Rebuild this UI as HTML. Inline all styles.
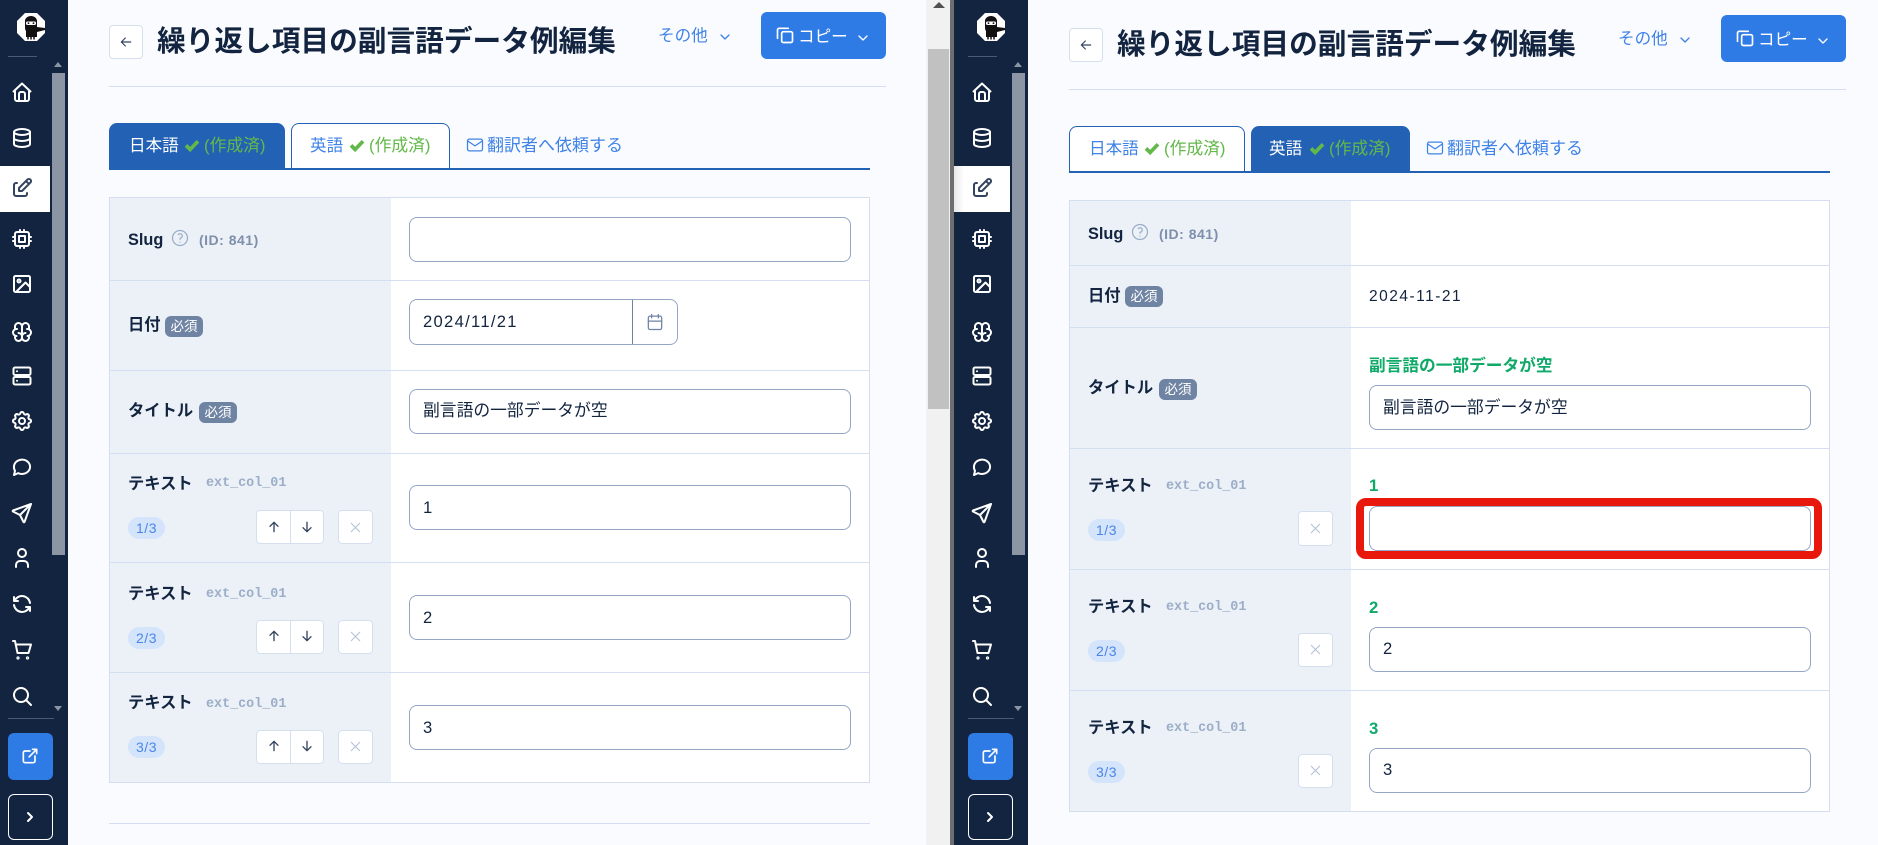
<!DOCTYPE html>
<html lang="ja"><head><meta charset="utf-8"><title>繰り返し項目の副言語データ例編集</title>
<style>
html,body{margin:0;padding:0;width:1878px;height:845px;overflow:hidden;background:#fafbfe}
body{position:relative;font-family:"Liberation Sans","Noto Sans CJK JP",sans-serif;color:#12243f}
div,svg,span.t{position:absolute;box-sizing:border-box}
.t{position:absolute;white-space:nowrap;line-height:24px;height:24px;font-size:16.6px}
.b{font-weight:700}
.side{background:#12243f;top:0;height:845px}
.i{width:24px;height:24px;fill:none;stroke:#fff;stroke-width:2;stroke-linecap:round;stroke-linejoin:round}
.dk{stroke:#33445f}
.inp{background:#fff;border:1px solid #94a6c4;border-radius:8px;height:45px;width:442px}
.h{background:#ecf1f8}
.ln{height:1px;background:#d3dff0}
.lab{font-weight:700;font-size:16.3px}
.mono{font-family:"Liberation Mono",monospace;font-weight:700;font-size:13.4px;color:#9cadc8}
.req{background:#6f83a3;color:#fff;border-radius:6px;width:38px;height:21px;font-size:13.5px;line-height:21px;text-align:center}
.cnt{background:#d4e4fb;color:#4a86e8;border-radius:11px;width:37px;height:22px;font-size:14px;line-height:22px;text-align:center;letter-spacing:.5px}
.btn{background:#fff;border:1px solid #d5e0ef;border-radius:4px}
.val{font-size:16.6px;letter-spacing:.5px}
.link{color:#3f83e6}
.grn{color:#63b84a}
.g{color:#0fa968;font-weight:700;font-size:16.7px}
.tri{width:0;height:0;border-left:4px solid transparent;border-right:4px solid transparent}
.ck{width:18px;height:18px;stroke:#63b84a;stroke-width:5;stroke-linecap:butt;stroke-linejoin:miter}
</style></head><body>
<svg width="0" height="0" style="position:absolute">
<defs>
<symbol id="home" viewBox="0 0 24 24"><path d="M5 11.500V19a2 2 0 0 0 2 2h10a2 2 0 0 0 2-2v-7.500M3.500 11.500 12 3.500l8.500 8M9 21v-7a2 2 0 0 1 2-2h2a2 2 0 0 1 2 2v7"/></symbol>
<symbol id="db" viewBox="0 0 24 24"><ellipse cx="12" cy="6" rx="8" ry="3"/><path d="M4 6v12a8 3 0 0 0 16 0V6M4 12a8 3 0 0 0 16 0"/></symbol>
<symbol id="edit" viewBox="0 0 24 24"><path d="M7 7H6a2 2 0 0 0-2 2v9a2 2 0 0 0 2 2h9a2 2 0 0 0 2-2v-1M20.400 6.600a2.100 2.100 0 0 0-3-3L9 12v3h3zM16 5l3 3"/></symbol>
<symbol id="chip" viewBox="0 0 24 24"><rect x="5" y="5" width="14" height="14" rx="2"/><path d="M9 9h6v6H9zM3 10h2M3 14h2M10 3v2M14 3v2M21 10h-2M21 14h-2M14 21v-2M10 21v-2"/></symbol>
<symbol id="img" viewBox="0 0 24 24"><rect x="4" y="4" width="16" height="16" rx="1.500"/><circle cx="9" cy="9" r="1.500"/><path d="M20 15l-4.500-4.500L6 20"/></symbol>
<symbol id="brain" viewBox="0 0 24 24"><path d="M15.500 13a3.500 3.500 0 0 0-3.500 3.500v1a3.500 3.500 0 0 0 7 0v-1.800M8.500 13a3.500 3.500 0 0 1 3.500 3.500v1a3.500 3.500 0 0 1-7 0v-1.800M17.500 16a3.500 3.500 0 0 0 0-7h-.5M19 9.300V6.500a3.500 3.500 0 0 0-7 0M6.500 16a3.500 3.500 0 0 1 0-7h.5M5 9.300V6.500a3.500 3.500 0 0 1 7 0v10"/></symbol>
<symbol id="srv" viewBox="0 0 24 24"><rect x="3.500" y="3.500" width="17" height="7.500" rx="1.500"/><rect x="3.500" y="13" width="17" height="7.500" rx="1.500"/><path d="M7 7.200h.01M7 16.700h.01"/></symbol>
<symbol id="gear" viewBox="0 0 24 24"><path d="M10.325 4.317c.426-1.756 2.924-1.756 3.350 0a1.724 1.724 0 0 0 2.573 1.066c1.543-.94 3.310.826 2.370 2.370a1.724 1.724 0 0 0 1.065 2.572c1.756.426 1.756 2.924 0 3.350a1.724 1.724 0 0 0-1.066 2.573c.94 1.543-.826 3.310-2.370 2.370a1.724 1.724 0 0 0-2.572 1.065c-.426 1.756-2.924 1.756-3.350 0a1.724 1.724 0 0 0-2.573-1.066c-1.543.94-3.310-.826-2.370-2.370a1.724 1.724 0 0 0-1.065-2.572c-1.756-.426-1.756-2.924 0-3.350a1.724 1.724 0 0 0 1.066-2.573c-.94-1.543.826-3.310 2.370-2.370 1 .608 2.296.07 2.572-1.065z"/><circle cx="12" cy="12" r="3"/></symbol>
<symbol id="chat" viewBox="0 0 24 24"><path d="M4 20l1-4C3 12.500 3.800 8.500 7 6.200c3.200-2.300 7.700-2.100 10.600.4 2.900 2.500 3.300 6.500.9 9.400-2.400 2.900-6.800 3.800-10.300 2.100L4 20"/></symbol>
<symbol id="send" viewBox="0 0 24 24"><path d="M10 14L21 3M21 3l-6.500 18a.55.55 0 0 1-1 0L10 14l-7-3.500a.55.55 0 0 1 0-1L21 3"/></symbol>
<symbol id="user" viewBox="0 0 24 24"><circle cx="12" cy="7" r="4"/><path d="M6 21v-2a4 4 0 0 1 4-4h4a4 4 0 0 1 4 4v2"/></symbol>
<symbol id="sync" viewBox="0 0 24 24"><path d="M20 11A8.100 8.100 0 0 0 4.500 9M4 5v4h4M4 13a8.100 8.100 0 0 0 15.500 2m.5 4v-4h-4"/></symbol>
<symbol id="cart" viewBox="0 0 24 24"><path d="M3 3h2l2.500 12h11l2.500-8.500H6"/><circle cx="8" cy="20" r=".6"/><circle cx="17.500" cy="20" r=".6"/></symbol>
<symbol id="search" viewBox="0 0 24 24"><circle cx="11" cy="11" r="7"/><path d="M21 21l-5-5"/></symbol>
<symbol id="ext" viewBox="0 0 24 24"><path d="M12 6H6a2 2 0 0 0-2 2v10a2 2 0 0 0 2 2h10a2 2 0 0 0 2-2v-6M11 13l9-9M15 4h5v5"/></symbol>
<symbol id="chr" viewBox="0 0 24 24"><path d="M9 6l6 6-6 6"/></symbol>
<symbol id="chd" viewBox="0 0 24 24"><path d="M6 9l6 6 6-6"/></symbol>
<symbol id="copy" viewBox="0 0 24 24"><rect x="8" y="8" width="13" height="13" rx="2"/><path d="M16 4H5a2 2 0 0 0-2 2v10"/></symbol>
<symbol id="back" viewBox="0 0 24 24"><path d="M5 12h14M5 12l6 6M5 12l6-6"/></symbol>
<symbol id="up" viewBox="0 0 24 24"><path d="M12 5v14M18 11l-6-6M6 11l6-6"/></symbol>
<symbol id="dn" viewBox="0 0 24 24"><path d="M12 5v14M18 13l-6 6M6 13l6 6"/></symbol>
<symbol id="x" viewBox="0 0 24 24"><path d="M18 6L6 18M6 6l12 12"/></symbol>
<symbol id="chk" viewBox="0 0 24 24"><path d="M4 12.500l5.500 5.500L20 7"/></symbol>
<symbol id="mail" viewBox="0 0 24 24"><rect x="3" y="5" width="18" height="14" rx="2"/><path d="M3 7l9 6 9-6"/></symbol>
<symbol id="cal" viewBox="0 0 24 24"><rect x="4" y="5" width="16" height="16" rx="2"/><path d="M16 3v4M8 3v4M4 11h16"/></symbol>
<symbol id="help" viewBox="0 0 24 24"><circle cx="12" cy="12" r="9"/><path d="M12 17v.01M12 13.500a1.500 1.500 0 0 1 1-1.500 2.600 2.600 0 1 0-3-4"/></symbol>
<symbol id="logo" viewBox="0 0 28 28"><path d="M8 0h12l8 8v12l-8 8H8l-8-8V8z" fill="#fff"/><path d="M8 8c0-3 3-5 6-5s6 2 6 5v6l8 1v2l-8 2v5H9v-6c-1-1-1-3-1-5z" fill="#111"/><rect x="9" y="8.500" width="10" height="3.500" rx="1.500" fill="#fff"/><circle cx="11.500" cy="10.200" r=".9" fill="#111"/><circle cx="16.500" cy="10.200" r=".9" fill="#111"/><path d="M11 24v2.500M14 24v2.500M17 24v2.500" stroke="#111" stroke-width="1.500"/></symbol>
</defs></svg>

<!-- LEFT SIDEBAR -->
<div class="side" style="left:0;width:68px"></div>
<div style="left:52px;top:73px;width:13px;height:482px;background:#8b95a3"></div>
<div class="tri" style="left:54px;top:62px;border-bottom:5px solid #8b95a3"></div>
<div class="tri" style="left:54px;top:706px;border-top:5px solid #8b95a3"></div>
<svg style="left:17px;top:13px" width="28" height="28"><use href="#logo"/></svg>
<div style="left:8px;top:56px;width:29px;height:1px;background:#4a5a72"></div>
<div style="left:0;top:166px;width:50px;height:46px;background:#fff"></div>
<svg class="i" style="left:10px;top:80px"><use href="#home"/></svg>
<svg class="i" style="left:10px;top:126px"><use href="#db"/></svg>
<svg class="i dk" style="left:10px;top:176px"><use href="#edit"/></svg>
<svg class="i" style="left:10px;top:227px"><use href="#chip"/></svg>
<svg class="i" style="left:10px;top:272px"><use href="#img"/></svg>
<svg class="i" style="left:10px;top:320px"><use href="#brain"/></svg>
<svg class="i" style="left:10px;top:364px"><use href="#srv"/></svg>
<svg class="i" style="left:10px;top:409px"><use href="#gear"/></svg>
<svg class="i" style="left:10px;top:455px"><use href="#chat"/></svg>
<svg class="i" style="left:10px;top:501px"><use href="#send"/></svg>
<svg class="i" style="left:10px;top:546px"><use href="#user"/></svg>
<svg class="i" style="left:10px;top:592px"><use href="#sync"/></svg>
<svg class="i" style="left:10px;top:638px"><use href="#cart"/></svg>
<svg class="i" style="left:10px;top:684px"><use href="#search"/></svg>
<div style="left:8px;top:718px;width:46px;height:1px;background:#4a5a72"></div>
<div style="left:8px;top:733px;width:45px;height:47px;background:#2f7be6;border-radius:6px"></div>
<svg class="i" style="left:20px;top:746px;width:20px;height:20px"><use href="#ext"/></svg>
<div style="left:8px;top:794px;width:45px;height:46px;border:1px solid #fff;border-radius:6px"></div>
<svg class="i" style="left:22px;top:809px;width:16px;height:16px;stroke-width:3"><use href="#chr"/></svg>

<!-- LEFT CONTENT -->
<div class="btn" style="left:109px;top:25px;width:34px;height:34px"></div>
<svg class="i" style="left:118px;top:34px;width:16px;height:16px;stroke:#33445f;stroke-width:1.800"><use href="#back"/></svg>
<span class="t b" style="left:157px;top:30px;font-size:28.7px">繰り返し項目の副言語データ例編集</span>
<span class="t link" style="left:658px;top:24px">その他</span>
<svg class="i" style="left:717px;top:29px;width:16px;height:16px;stroke:#3f83e6"><use href="#chd"/></svg>
<div style="left:761px;top:12px;width:125px;height:47px;background:#2f7be6;border-radius:6px"></div>
<svg class="i" style="left:775px;top:25px;width:20px;height:20px"><use href="#copy"/></svg>
<span class="t" style="left:798px;top:25px;color:#fff">コピー</span>
<svg class="i" style="left:855px;top:30px;width:16px;height:16px"><use href="#chd"/></svg>
<div class="ln" style="left:109px;top:86px;width:777px"></div>

<div style="left:109px;top:123px;width:176px;height:47px;background:#2361b5;border-radius:8px 8px 0 0"></div>
<span class="t" style="left:129px;top:134px;color:#fff">日本語</span>
<svg class="i ck" style="left:183px;top:136px"><use href="#chk"/></svg>
<span class="t grn" style="left:204px;top:134px;font-size:16.8px">(作成済)</span>
<div style="left:291px;top:123px;width:159px;height:47px;background:#fff;border:1.500px solid #2361b5;border-bottom:0;border-radius:8px 8px 0 0"></div>
<span class="t link" style="left:310px;top:134px">英語</span>
<svg class="i ck" style="left:348px;top:136px"><use href="#chk"/></svg>
<span class="t grn" style="left:369px;top:134px;font-size:16.8px">(作成済)</span>
<svg class="i" style="left:465px;top:135px;width:20px;height:20px;stroke:#3f83e6;stroke-width:1.500"><use href="#mail"/></svg>
<span class="t link" style="left:487px;top:134px;font-size:17px">翻訳者へ依頼する</span>
<div style="left:109px;top:168px;width:761px;height:2px;background:#2361b5"></div>

<div style="left:109px;top:197px;width:761px;height:586px;background:#fff;border:1px solid #d3dff0"></div>
<div class="h" style="left:110px;top:198px;width:281px;height:584px"></div>
<div class="ln" style="left:110px;top:280px;width:759px"></div>
<div class="ln" style="left:110px;top:370px;width:759px"></div>
<div class="ln" style="left:110px;top:453px;width:759px"></div>
<div class="ln" style="left:110px;top:562px;width:759px"></div>
<div class="ln" style="left:110px;top:672px;width:759px"></div>

<span class="t lab" style="left:128px;top:228px">Slug</span>
<svg class="i" style="left:170px;top:228px;width:20px;height:20px;stroke:#9cadc8;stroke-width:1.500"><use href="#help"/></svg>
<span class="t b" style="left:199px;top:228px;font-size:14px;color:#7e8fac;letter-spacing:.5px">(ID: 841)</span>
<div class="inp" style="left:409px;top:217px"></div>

<span class="t lab" style="left:128px;top:313px">日付</span>
<div class="req" style="left:165px;top:316px">必須</div>
<div class="inp" style="left:409px;top:299px;width:269px;height:46px"></div>
<div style="left:632px;top:300px;width:1px;height:44px;background:#6f83a3"></div>
<span class="t val" style="left:423px;top:310px;letter-spacing:1.300px">2024/11/21</span>
<svg class="i" style="left:645px;top:312px;width:20px;height:20px;stroke:#6f83a3;stroke-width:1.500"><use href="#cal"/></svg>

<span class="t lab" style="left:128px;top:399px">タイトル</span>
<div class="req" style="left:199px;top:402px">必須</div>
<div class="inp" style="left:409px;top:389px"></div>
<span class="t" style="left:423px;top:399px;font-size:16.8px">副言語の一部データが空</span>

<span class="t lab" style="left:128px;top:472px">テキスト</span>
<span class="t mono" style="left:206px;top:472px">ext_col_01</span>
<div class="cnt" style="left:128px;top:517px">1/3</div>
<div class="btn" style="left:256px;top:510px;width:68px;height:34px"></div>
<div style="left:290px;top:510px;width:1px;height:34px;background:#d5e0ef"></div>
<svg class="i dk" style="left:266px;top:519px;width:16px;height:16px"><use href="#up"/></svg>
<svg class="i dk" style="left:299px;top:519px;width:16px;height:16px"><use href="#dn"/></svg>
<div class="btn" style="left:338px;top:510px;width:35px;height:34px"></div>
<svg class="i" style="left:347px;top:519px;width:17px;height:17px;stroke:#b5c3d8;stroke-width:1.500"><use href="#x"/></svg>
<div class="inp" style="left:409px;top:485px"></div>
<span class="t val" style="left:423px;top:496px">1</span>

<span class="t lab" style="left:128px;top:582px">テキスト</span>
<span class="t mono" style="left:206px;top:583px">ext_col_01</span>
<div class="cnt" style="left:128px;top:627px">2/3</div>
<div class="btn" style="left:256px;top:620px;width:68px;height:34px"></div>
<div style="left:290px;top:620px;width:1px;height:34px;background:#d5e0ef"></div>
<svg class="i dk" style="left:266px;top:628px;width:16px;height:16px"><use href="#up"/></svg>
<svg class="i dk" style="left:299px;top:628px;width:16px;height:16px"><use href="#dn"/></svg>
<div class="btn" style="left:338px;top:620px;width:35px;height:34px"></div>
<svg class="i" style="left:347px;top:628px;width:17px;height:17px;stroke:#b5c3d8;stroke-width:1.500"><use href="#x"/></svg>
<div class="inp" style="left:409px;top:595px"></div>
<span class="t val" style="left:423px;top:606px">2</span>

<span class="t lab" style="left:128px;top:691px">テキスト</span>
<span class="t mono" style="left:206px;top:693px">ext_col_01</span>
<div class="cnt" style="left:128px;top:736px">3/3</div>
<div class="btn" style="left:256px;top:730px;width:68px;height:34px"></div>
<div style="left:290px;top:730px;width:1px;height:34px;background:#d5e0ef"></div>
<svg class="i dk" style="left:266px;top:738px;width:16px;height:16px"><use href="#up"/></svg>
<svg class="i dk" style="left:299px;top:738px;width:16px;height:16px"><use href="#dn"/></svg>
<div class="btn" style="left:338px;top:730px;width:35px;height:34px"></div>
<svg class="i" style="left:347px;top:738px;width:17px;height:17px;stroke:#b5c3d8;stroke-width:1.500"><use href="#x"/></svg>
<div class="inp" style="left:409px;top:705px"></div>
<span class="t val" style="left:423px;top:716px">3</span>
<div class="ln" style="left:109px;top:823px;width:761px"></div>

<!-- BROWSER SCROLLBAR -->
<div style="left:926px;top:0;width:24px;height:845px;background:#f1f1f1"></div>
<div style="left:928px;top:49px;width:21px;height:360px;background:#c1c1c1"></div>
<div class="tri" style="left:933px;top:2px;border-left-width:6px;border-right-width:6px;border-bottom:6px solid #505050"></div>
<div style="left:950px;top:0;width:4px;height:845px;background:#6e6e6e"></div>

<!-- RIGHT SIDEBAR -->
<div class="side" style="left:954px;width:74px"></div>
<div style="left:1012px;top:73px;width:13px;height:482px;background:#8b95a3"></div>
<div class="tri" style="left:1014px;top:62px;border-bottom:5px solid #8b95a3"></div>
<div class="tri" style="left:1014px;top:706px;border-top:5px solid #8b95a3"></div>
<svg style="left:977px;top:13px" width="28" height="28"><use href="#logo"/></svg>
<div style="left:968px;top:56px;width:29px;height:1px;background:#4a5a72"></div>
<div style="left:954px;top:166px;width:56px;height:46px;background:linear-gradient(90deg,#e8e8e8,#fff 10px)"></div>
<svg class="i" style="left:970px;top:80px"><use href="#home"/></svg>
<svg class="i" style="left:970px;top:126px"><use href="#db"/></svg>
<svg class="i dk" style="left:970px;top:176px"><use href="#edit"/></svg>
<svg class="i" style="left:970px;top:227px"><use href="#chip"/></svg>
<svg class="i" style="left:970px;top:272px"><use href="#img"/></svg>
<svg class="i" style="left:970px;top:320px"><use href="#brain"/></svg>
<svg class="i" style="left:970px;top:364px"><use href="#srv"/></svg>
<svg class="i" style="left:970px;top:409px"><use href="#gear"/></svg>
<svg class="i" style="left:970px;top:455px"><use href="#chat"/></svg>
<svg class="i" style="left:970px;top:501px"><use href="#send"/></svg>
<svg class="i" style="left:970px;top:546px"><use href="#user"/></svg>
<svg class="i" style="left:970px;top:592px"><use href="#sync"/></svg>
<svg class="i" style="left:970px;top:638px"><use href="#cart"/></svg>
<svg class="i" style="left:970px;top:684px"><use href="#search"/></svg>
<div style="left:968px;top:718px;width:46px;height:1px;background:#4a5a72"></div>
<div style="left:968px;top:733px;width:45px;height:47px;background:#2f7be6;border-radius:6px"></div>
<svg class="i" style="left:980px;top:746px;width:20px;height:20px"><use href="#ext"/></svg>
<div style="left:968px;top:794px;width:45px;height:46px;border:1px solid #fff;border-radius:6px"></div>
<svg class="i" style="left:982px;top:809px;width:16px;height:16px;stroke-width:3"><use href="#chr"/></svg>

<!-- RIGHT CONTENT -->
<div class="btn" style="left:1069px;top:28px;width:34px;height:34px"></div>
<svg class="i" style="left:1078px;top:37px;width:16px;height:16px;stroke:#33445f;stroke-width:1.800"><use href="#back"/></svg>
<span class="t b" style="left:1117px;top:33px;font-size:28.7px">繰り返し項目の副言語データ例編集</span>
<span class="t link" style="left:1618px;top:27px">その他</span>
<svg class="i" style="left:1677px;top:32px;width:16px;height:16px;stroke:#3f83e6"><use href="#chd"/></svg>
<div style="left:1721px;top:15px;width:125px;height:47px;background:#2f7be6;border-radius:6px"></div>
<svg class="i" style="left:1735px;top:28px;width:20px;height:20px"><use href="#copy"/></svg>
<span class="t" style="left:1758px;top:28px;color:#fff">コピー</span>
<svg class="i" style="left:1815px;top:33px;width:16px;height:16px"><use href="#chd"/></svg>
<div class="ln" style="left:1069px;top:89px;width:777px"></div>

<div style="left:1069px;top:126px;width:176px;height:47px;background:#fff;border:1.500px solid #2361b5;border-bottom:0;border-radius:8px 8px 0 0"></div>
<span class="t link" style="left:1089px;top:137px">日本語</span>
<svg class="i ck" style="left:1143px;top:139px"><use href="#chk"/></svg>
<span class="t grn" style="left:1164px;top:137px;font-size:16.8px">(作成済)</span>
<div style="left:1251px;top:126px;width:159px;height:47px;background:#2361b5;border-radius:8px 8px 0 0"></div>
<span class="t" style="left:1269px;top:137px;color:#fff">英語</span>
<svg class="i ck" style="left:1308px;top:139px"><use href="#chk"/></svg>
<span class="t grn" style="left:1329px;top:137px;font-size:16.8px">(作成済)</span>
<svg class="i" style="left:1425px;top:138px;width:20px;height:20px;stroke:#3f83e6;stroke-width:1.500"><use href="#mail"/></svg>
<span class="t link" style="left:1447px;top:137px;font-size:17px">翻訳者へ依頼する</span>
<div style="left:1069px;top:171px;width:761px;height:2px;background:#2361b5"></div>

<div style="left:1069px;top:200px;width:761px;height:612px;background:#fff;border:1px solid #d3dff0"></div>
<div class="h" style="left:1070px;top:201px;width:281px;height:610px"></div>
<div class="ln" style="left:1070px;top:265px;width:759px"></div>
<div class="ln" style="left:1070px;top:327px;width:759px"></div>
<div class="ln" style="left:1070px;top:448px;width:759px"></div>
<div class="ln" style="left:1070px;top:569px;width:759px"></div>
<div class="ln" style="left:1070px;top:690px;width:759px"></div>

<span class="t lab" style="left:1088px;top:222px">Slug</span>
<svg class="i" style="left:1130px;top:222px;width:20px;height:20px;stroke:#9cadc8;stroke-width:1.500"><use href="#help"/></svg>
<span class="t b" style="left:1159px;top:222px;font-size:14px;color:#7e8fac;letter-spacing:.5px">(ID: 841)</span>

<span class="t lab" style="left:1088px;top:284px">日付</span>
<div class="req" style="left:1125px;top:286px">必須</div>
<span class="t" style="left:1369px;top:285px;font-size:15.5px;letter-spacing:1.500px">2024-11-21</span>

<span class="t lab" style="left:1088px;top:376px">タイトル</span>
<div class="req" style="left:1159px;top:379px">必須</div>
<span class="t g" style="left:1369px;top:354px">副言語の一部データが空</span>
<div class="inp" style="left:1369px;top:385px"></div>
<span class="t" style="left:1383px;top:396px;font-size:16.8px">副言語の一部データが空</span>

<span class="t lab" style="left:1088px;top:474px">テキスト</span>
<span class="t mono" style="left:1166px;top:475px">ext_col_01</span>
<div class="cnt" style="left:1088px;top:519px">1/3</div>
<div class="btn" style="left:1298px;top:511px;width:35px;height:35px"></div>
<svg class="i" style="left:1307px;top:520px;width:17px;height:17px;stroke:#b5c3d8;stroke-width:1.500"><use href="#x"/></svg>
<span class="t g" style="left:1369px;top:474px">1</span>
<div style="left:1356px;top:498px;width:466px;height:61px;border:8px solid #e8190c;border-radius:10px;background:#fff"></div>
<div class="inp" style="left:1369px;top:506px"></div>

<span class="t lab" style="left:1088px;top:595px">テキスト</span>
<span class="t mono" style="left:1166px;top:596px">ext_col_01</span>
<div class="cnt" style="left:1088px;top:640px">2/3</div>
<div class="btn" style="left:1298px;top:633px;width:35px;height:34px"></div>
<svg class="i" style="left:1307px;top:641px;width:17px;height:17px;stroke:#b5c3d8;stroke-width:1.500"><use href="#x"/></svg>
<span class="t g" style="left:1369px;top:596px">2</span>
<div class="inp" style="left:1369px;top:627px"></div>
<span class="t val" style="left:1383px;top:637px">2</span>

<span class="t lab" style="left:1088px;top:716px">テキスト</span>
<span class="t mono" style="left:1166px;top:717px">ext_col_01</span>
<div class="cnt" style="left:1088px;top:761px">3/3</div>
<div class="btn" style="left:1298px;top:754px;width:35px;height:34px"></div>
<svg class="i" style="left:1307px;top:762px;width:17px;height:17px;stroke:#b5c3d8;stroke-width:1.500"><use href="#x"/></svg>
<span class="t g" style="left:1369px;top:717px">3</span>
<div class="inp" style="left:1369px;top:748px"></div>
<span class="t val" style="left:1383px;top:758px">3</span>
</body></html>
